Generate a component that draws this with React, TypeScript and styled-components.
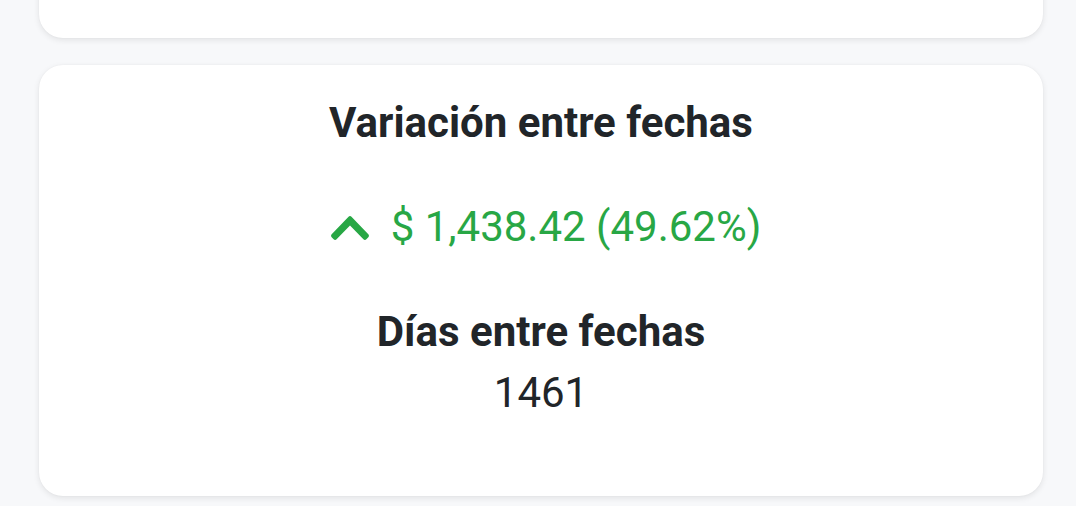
import React from "react";
import styled, { createGlobalStyle } from "styled-components";

const GlobalStyle = createGlobalStyle`
  html, body {
    margin: 0;
    padding: 0;
    background: #f7f8fa;
    font-family: Roboto, "Liberation Sans", Arial, sans-serif;
    color: #212529;
  }
  #root { overflow: hidden; height: 506px; }
`;

const Page = styled.div`
  display: flex;
  flex-direction: column;
  gap: 27px;
  padding: 0 33px 0 39px;
`;

const Card = styled.section<{ $clipped?: boolean }>`
  background: #ffffff;
  border-radius: 24px;
  box-shadow: 0 2px 6px rgba(0, 0, 0, 0.09), 0 0 2px rgba(0, 0, 0, 0.04);
  ${(p) => (p.$clipped ? "height: 100px; margin-top: -62px;" : "")}
`;

const CardBody = styled.div`
  display: flex;
  flex-direction: column;
  align-items: center;
  padding: 33px 0 78px;
  text-align: center;
`;

const Title = styled.h2<{ $gap?: number }>`
  margin: ${(p) => p.$gap ?? 0}px 0 0;
  font-size: 42px;
  line-height: 50px;
  font-weight: 700;
  color: #212529;
`;

const Variation = styled.div`
  margin-top: 54px;
  padding-left: 10px;
  display: flex;
  align-items: center;
  gap: 22px;
  color: #28a745;
  font-size: 42px;
  line-height: 50px;
`;

const Chevron = styled.svg`
  width: 38px;
  height: 24px;
  fill: #28a745;
  display: block;
  margin-top: 2px;
`;

const Value = styled.div`
  margin-top: 11px;
  font-size: 42px;
  line-height: 50px;
  font-weight: 400;
  color: #212529;
`;

export default function App() {
  return (
    <>
      <GlobalStyle />
      <Page>
        <Card $clipped />
        <Card>
          <CardBody>
            <Title>Variación entre fechas</Title>
            <Variation>
              <Chevron viewBox="5 123 438 266" preserveAspectRatio="none" aria-hidden="true">
                <path d="M240.971 130.524l194.343 194.343c9.373 9.373 9.373 24.569 0 33.941l-22.667 22.667c-9.357 9.357-24.522 9.375-33.901.04L224 227.495 69.255 381.516c-9.379 9.335-24.544 9.317-33.901-.04l-22.667-22.667c-9.373-9.373-9.373-24.569 0-33.941L207.03 130.525c9.372-9.373 24.568-9.373 33.941-.001z" />
              </Chevron>
              <span>$ 1,438.42 (49.62%)</span>
            </Variation>
            <Title $gap={55}>Días entre fechas</Title>
            <Value>1461</Value>
          </CardBody>
        </Card>
      </Page>
    </>
  );
}
